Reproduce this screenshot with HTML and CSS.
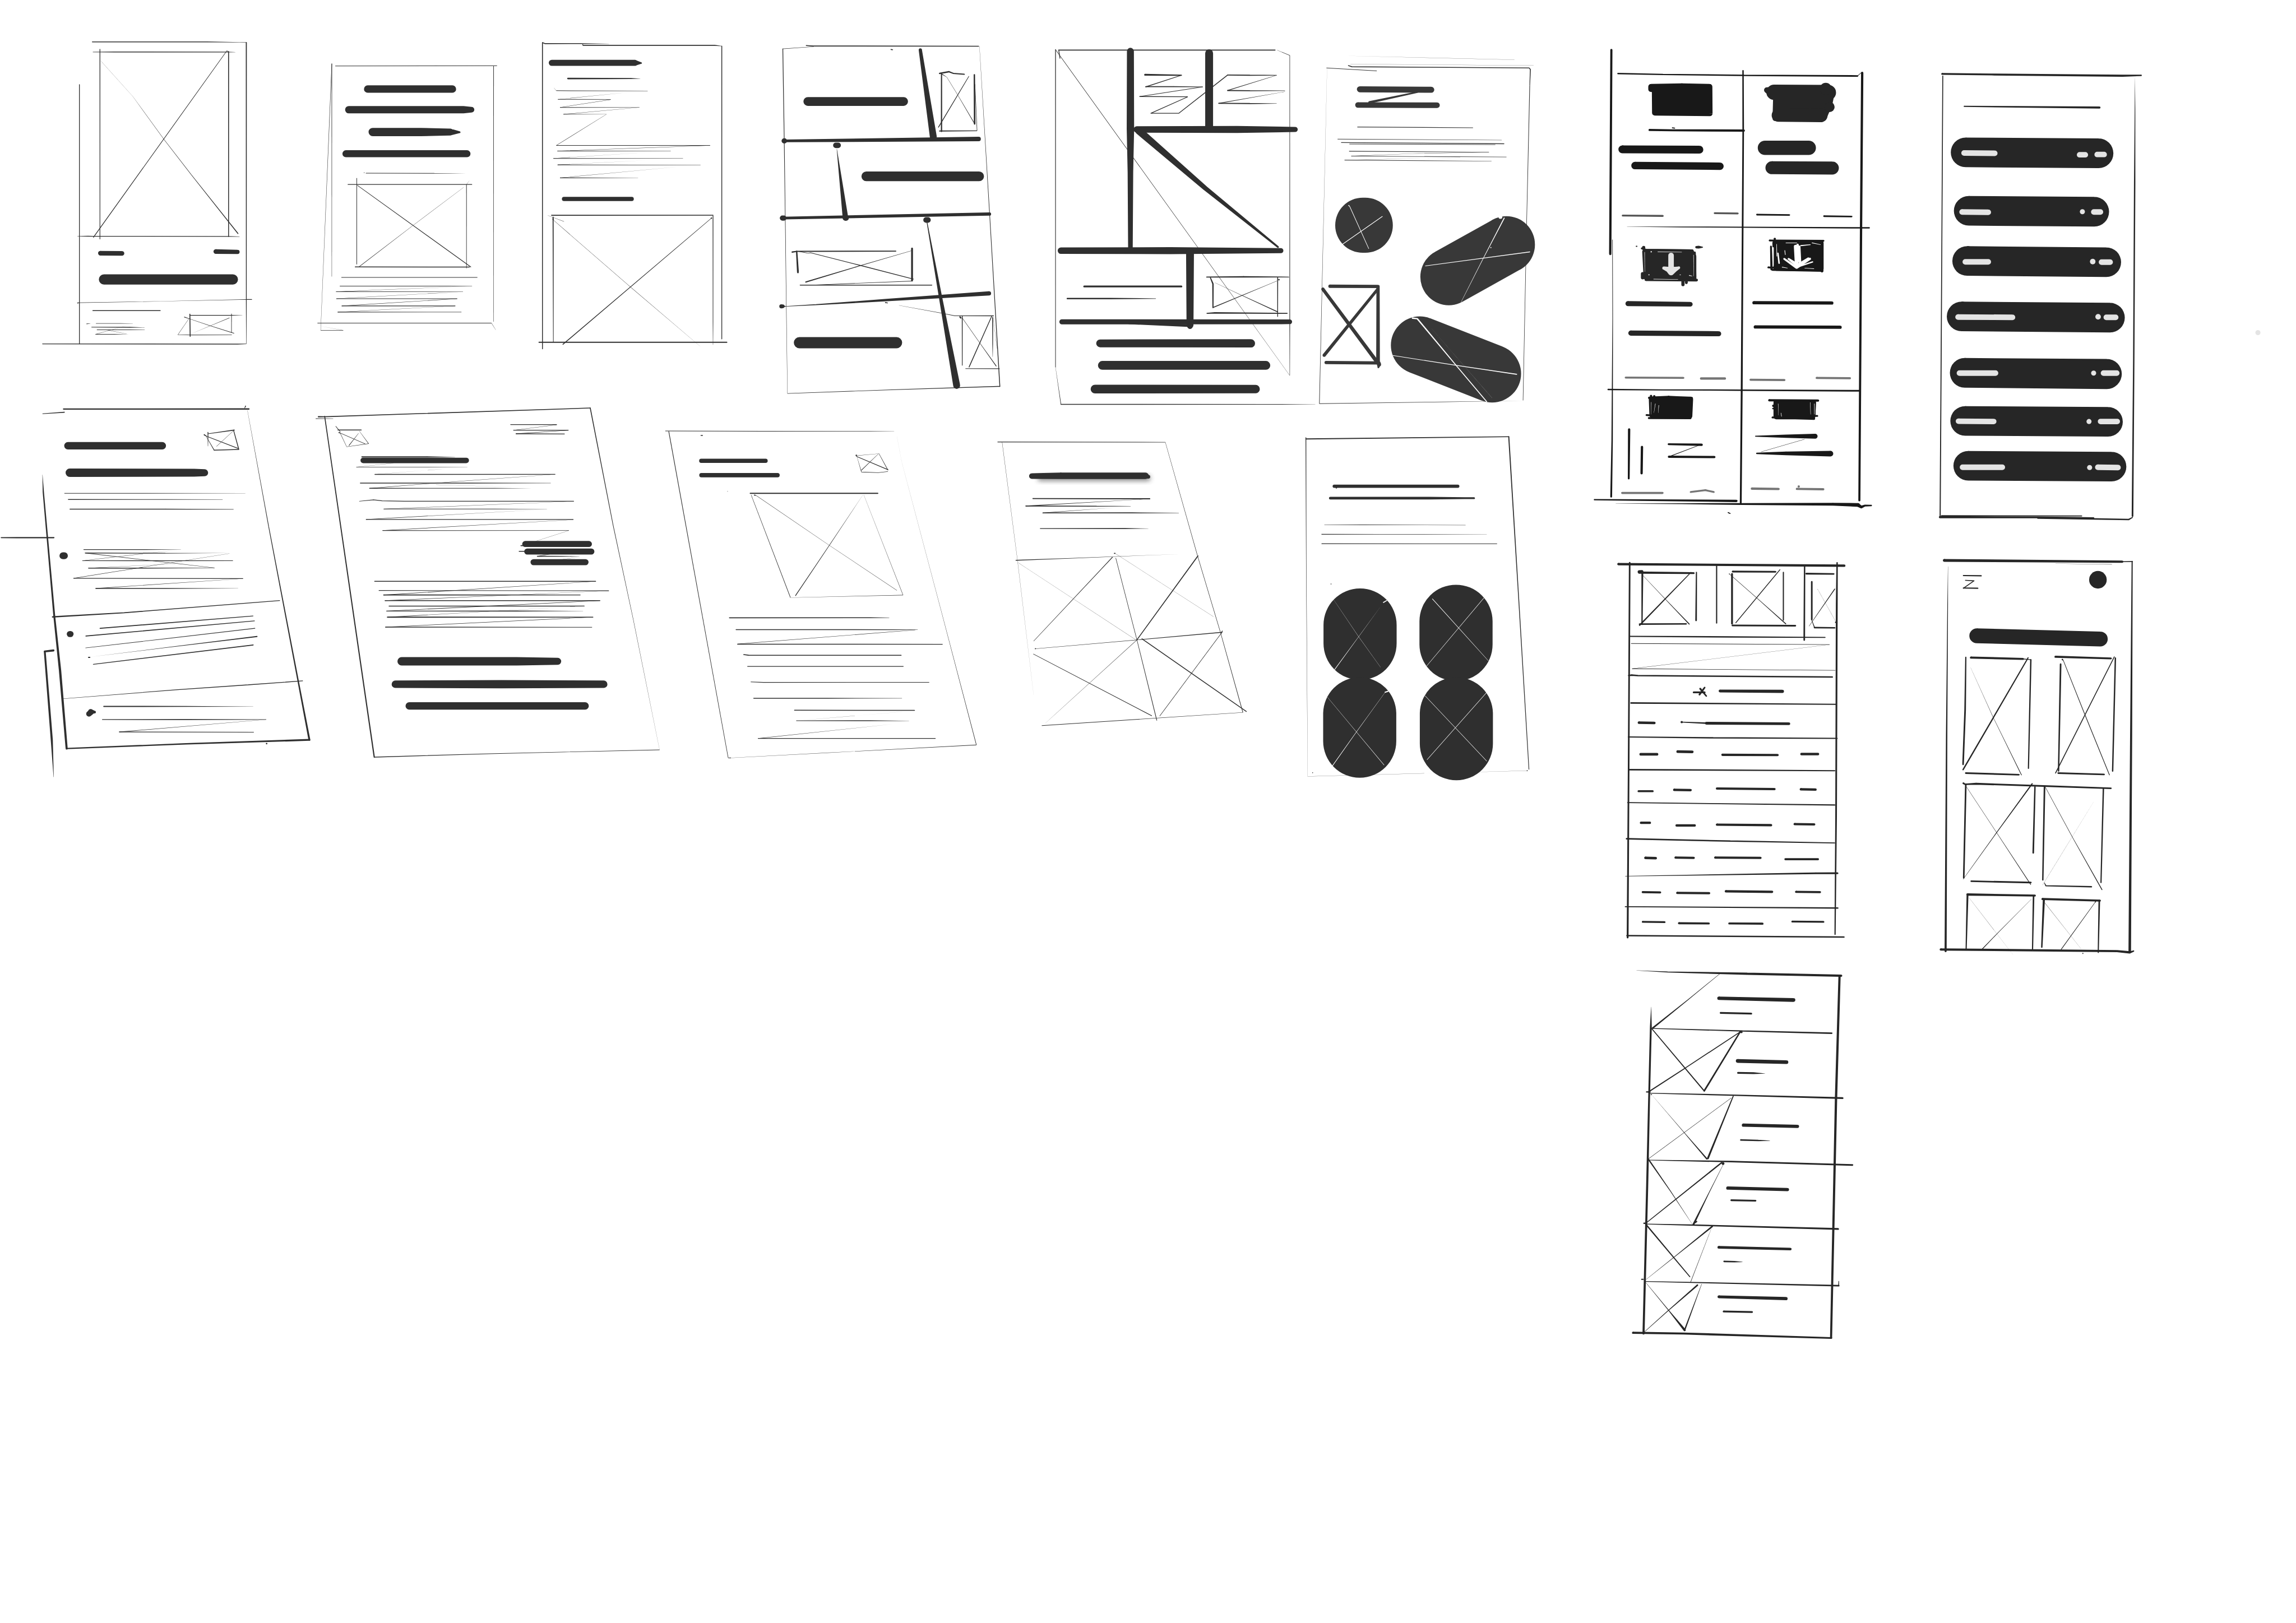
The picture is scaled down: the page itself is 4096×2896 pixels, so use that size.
FILE: index.html
```html
<!DOCTYPE html>
<html lang="en">
<head>
<meta charset="utf-8">
<title>Wireframe thumbnails</title>
<link rel="stylesheet" href="styles.css">
</head>
<body>
<main class="board">
<svg class="board-canvas" viewBox="0 0 4961 3508" role="img" aria-label="Wireframe thumbnails">
<defs><filter id="soft" x="-10%" y="-60%" width="120%" height="220%"><feGaussianBlur stdDeviation="5"/></filter></defs>
<g id="sheets"></g>
</svg>
</main>
<script src="sketches.js"></script>
</body>
</html>
```
FILE: styles.css
```css
body {
  margin: 0;
  background: #fff;
}

.board {
  height: 100vh;
  overflow: hidden;
}

.board-canvas {
  display: block;
  width: 100%;
  height: 100%;
}

.ink-graphite { fill: #2f2f2f; }
.ink-charcoal { fill: #383838; }
.ink-black { fill: #181818; }
.ink-dark { fill: #262626; }
.ink-grey { fill: #757575; }
.ink-mid { fill: #555; }
.ink-light { fill: #e4e4e4; }
.ink-white { fill: #fff; }

.ink-soft {
  fill: #2f2f2f;
  opacity: 0.6;
  filter: url(#soft);
}
```
FILE: sketches.js
```js
// Each sheet has an origin on the board, its own units per board unit, and an ink.
// A stroke is a line of "x,y,w" points; w is the pen width in board units and
// carries over to the next point when left out.
// A line that starts with "@name" changes ink, "f" fills a closed outline.
const sheets = [
{ at: [80, 70], unit: [3, 2.24], ink: 'graphite', strokes: `
358,46,2 1100,46,1.6 1310,48,.6 1356,49,1
1356,49,2.2 1356,1300,1.6 1356,1508,.7
361,95,1 500,95,1.8 1230,95,1.6 1285,96,.4
407,82,1.6 407,1002,1.4
1230,89,1 365,992,1.6
1230,89,1 1241,93
1241,93,2 1241,988,1.8
415,140,.05 620,310,.3 820,516,.7 1000,690,1 1302,974,2
274,253,1.6 274,1508,1.6
261,987,.5 330,987,2 360,987,1.6 1240,988 1312,989,.6
410,1069,10 550,1070,10
1158,1061,10 1299,1063,9
433,1196,22 1269,1196,22
262,1310,2 274,1309,1 800,1302,.5 1356,1293,.9 1360,1293,1.6 1391,1293
361,1347,1.8 798,1347
320,1411,1.4 345,1410,.4
381,1409,.9 540,1409,1 620,1410,.2
352,1427,1.2 600,1428,1.8 697,1429,.4
387,1440,1.4 600,1440,1.2 697,1440,.4
378,1462,1.2 500,1462 595,1463,.2
378,1462,.6 600,1415,.1
450,1440,.4 580,1460,.1
990,1364,2 992,1472
990,1370,1.6 1260,1370,1.4 1330,1370,.4
1260,1362,1.2 1260,1455,1
912,1464,.6 1000,1465,1.2 1262,1465,1
953,1378,1.4 1000,1390,.5 1120,1420,.7 1277,1457,1.2
1247,1382,1.2 1005,1457,.3
985,1385,.5 912,1464,.6
35,1508,1.6 1300,1509,1.8 1356,1508,.8` },

{ at: [680, 80], unit: [1.742, 2.24], ink: 'graphite', strokes: `
64,128,1.2 64,1160,.6
64,130,.9 22,1420,.4
22,1420,1 107,1420,.9
22,1400,.2 107,1420,.3
77,140,1.2 686,139
673,140,1.2 673,1378,.7
10,1385,1 665,1385,1.2
665,1385,.6 681,1418,.2
199,252,16 518,252
128,352,16 560,352 590,352,12
218,460,18 400,460 510,460,15 545,461,4
117,565,15 573,565
192,659,1.2 450,660,1 570,660,.2
185,657,1.5 187,657
125,714,1.6 591,714
158,683,1.2 158,1101
571,714,1.2 571,1120,1
571,714,.4 582,695,.2
152,1113,1.6 582,1114,1.8
160,718,1 587,1113,1.6
167,1112,1 370,912,.5 560,728,.1
100,1164,1.4 612,1164,1
94,1206,1.2 500,1206,1 592,1206,.4
80,1233,1.2 558,1233,.8
81,1267,1.4 536,1267,1
102,1302,1.6 529,1302,1.4
86,1332,1.4 552,1332,.8
592,1206,.2 80,1233,.7
558,1233,.2 81,1267,.7
536,1267,.8 102,1302,.9
529,1302,.2 86,1332,.5
857,28,2 857,1510,1.8
857,27,2 866,32 1000,32,1.8 1108,33,.4
1008,36,1.6 1010,40,2.2 1505,40 1532,44,.6
1532,44,1.8 1532,1462,1.6
892,125,13 1205,125 1229,126,3
953,201,3.5 1090,201,3 1190,201,2 1225,202,.3
900,246,.3 909,260
909,260,1.2 1253,261,.6
915,302,1.2 1114,302,1
923,341,1.2 1222,341,.6
936,374,1.2 1098,374,.4
1180,268,.1 915,302,.5
1114,303,.5 923,341,.6
1222,341,.3 936,374,.7
1098,374,.3 909,525,.7
909,525,1.2 1488,525,1
1488,525,.5 913,552
913,552,1.2 1340,552,.4
1270,557,.1 898,588,.5
898,588,1.2 1386,588,.8
1250,597,.1 914,619,.5
914,619,1.4 1452,620,.7
1370,628,.1 923,682,.6
923,682,1.4 1217,682,.5
938,784,9 1193,784
891,863,2 1499,863,1.8
897,872,2.2 898,1477,1.2
1499,865,1.6 1499,1380,1.2 1499,1490,.5
1493,877,3
1493,877,1 934,1488,1.8
897,882,3
897,885,.5 1188,1210 1450,1497,.3
877,864,.3 938,893,.6
844,1478,2.2 1551,1478` },

{ at: [1660, 80], unit: [2.904, 1.96], ink: 'graphite', strokes: `
91,50,1.6 100,440,1.4 107,800,1 114,1200,.7 120,1510,.5
91,50,1 285,41,.7
238,36,1.8 285,38,2 1320,39,1.8
1325,39,.3 1388,740,1.2 1453,1480,1.8
1453,1480,1.8 800,1494,1.2 120,1510,1
770,53,2 780,54
954,55,7 1036,425,15
248,273,19 849,273
99,440,11 102,440
99,440,6 1320,432,9.5
424,459,12 438,459
430,475,.5 484,765,12
484,767,12 488,767
615,590,21 1323,590
88,767,11 98,767
93,767,6 1388,750,7
990,775,12 1002,775
996,785,1.5 1080,1100,7 1182,1476,15
150,911,3 180,908,2.5 800,907,2.2
178,908,3 186,997,4
902,896,4 902,1032
912,1026,1.5 580,968,1.6 265,914,1.2 250,916,1 190,908
235,1038,2.5 580,968,1.4 900,905,.5
200,1051,2 1026,1051
905,1034,1.2 300,1050,1
82,1141,9 90,1141,8
90,1141,5 110,1141,1 300,1134,2 730,1115,5 1385,1086,9
735,1125,2 750,1127,1.5
820,1137,.2 1090,1170,.8 1170,1181,1.2 1413,1181,1.6
1203,1186,3 1208,1190
1217,1183,1.8 1217,1392,1.4
1217,1190,.6 1327,1296,.9 1430,1394,1.6
1402,1183,1.6 1260,1398,1.8
1408,1188,2 1408,1300,1.5 1408,1355,.4
1237,1405,1.2 1450,1405,1.6
1412,1190,.2 1435,1320,.4
195,1295,24 805,1295
1075,154,3 1133,147 1160,154,2.5 1230,158
1087,158,2.5 1087,400,2.8
1293,160,3 1295,368,3.4
1297,200,.8 1310,397,1
1075,398,2.5 1310,397,1.5
1085,155,2 1120,170,.5 1188,245,.6 1295,368,1.4
1259,166,1.2 1068,382,1.8` },

{ at: [2260, 80], unit: [1.452, 1.912], ink: 'graphite', strokes: `
30,52,1.6 30,1365,1.2
30,1365,.3 47,1518,1.2
47,1518,1.8 700,1518,1.4 845,1518,.3
40,54,2 719,54
725,54,.4 765,76,1 765,1180,1.4 765,1399,.7
44,88,1.6 40,54
30,52,1 475,867,.9 765,1399,.3
265,59,15 265,380,16 265,560,12 265,870,10
512,67,17 512,370
285,382,14 600,382,15 782,382,11
292,388,16 500,625,10 728,868,4
47,883,14 390,883,15 737,883,11
452,890,17 452,1190,15
452,1196,11
50,1177,11 765,1177,10
260,1185,2 445,1192,6
311,156,4 425,158,2.5
425,158,1.4 313,206,1.8
313,205,2 400,205 492,206,1
492,206,1 294,246,1.4
294,246,1.6 445,247,1.4 329,315,1.6 417,315 570,157,1.8
570,157,2.2 640,158,2.6 724,158,1
724,158,.5 570,221,1.6
570,221,2.4 640,222,2 750,222,1
750,226,.4 542,274,1.6
542,274,2 640,275,2.4 724,275,.8
120,1031,4 425,1031
67,1081,3 200,1081 345,1081,1
504,992,2 620,991,3 762,992,1.6
516,995,2 524,1020,3 524,1118,2.4
727,995,2 727,1155,1.6
731,1003,3.2
505,1142,2 530,1140,3 757,1142,2
524,1118,2 615,1068,1.2 725,1008,.4
530,1015,.3 615,1068,.8 727,1136,2
170,1266,17 643,1266,18
177,1357,19 690,1357
154,1455,19 658,1455,18
@charcoal
915,77,.15 1470,94,.1
880,128,1.2 1038,140,1.4
949,118,2 960,123 1200,125,1.6 1516,128,1.8 1520,134,2 1518,200,1.4 1508,780,1 1497,1502
955,112,.3 1530,118
882,130,.1 872,700,.4 858,1515,1.2
858,1515,1.2 1250,1508,.8 1497,1503,.1
985,216,13 1209,218
979,281,12 1227,282
1165,228,3 1015,270,5
977,372,1.4 1340,375
915,422,1.4 1430,426,.8
927,436,1.6 1437,441,1.8
952,442,1.2 1410,445,1
952,472,1.6 1390,476,1
958,492,1 1445,496
937,509,1.2 1398,513,.8
1390,476,.3 1150,482,.4 958,492
1300,497,.1 937,509,.5
994,778,119 1002,778
1445,858,123 1264,991
1173,1274,125 1400,1391
891,1030,7 1042,1031 1042,1345,8
1045,1353,9 1043,1365,4
869,1042,7 1040,1345,8
1042,1040,6 873,1315,7
879,1345,7 1045,1347
@white
950,696,2 953,700,1.2 1013,875
1056,741,1.4 930,857
1438,748,2 1372,915,1.2 1302,1097,.5
1190,946,1 1372,914,1.5 1518,888,1.8
1426,744,8
1396,870,2.4
1150,1162,3 1165,1164 1287,1357,2 1383,1507
1088,1316,1.2 1287,1357,1.6 1477,1394,2
1200,1190,.05 1400,1492,.3` },

{ at: [0, 860], unit: [2.24, 1.867], ink: 'graphite', strokes: `
205,64,1.4 311,58,2
307,45,2.8 1204,45,3
1183,42,.8 1188,33,2
1197,50,.3 1300,520,1.4 1442,1140,3 1497,1380,4
1497,1380,4 900,1396,3 322,1415,2.6
205,310,.3 209,380,2.8 262,880,4 290,1100,5 322,1415,4.5
5,564,2 80,564,2.6 260,564,2.8
258,1019,4.5 216,1023,4
216,1023,4 250,1380,4.5 259,1530,.5
328,193,16 785,193
337,302,18 940,302,17 990,302,15
311,385,1.2 700,385 1187,385,.4
330,410,1.6 800,410,1.2 1077,410,.4
338,449,1.8 800,449,1.6 1130,450,1
405,612,1.6 700,612 875,612,.3
412,626,2 800,627,1.6 1110,626,.2
398,657,1.4 700,657,1.8 1127,657,1
428,687,2 700,687,1.8 1038,686,.8
355,728,1.4 1176,729
463,769,2 800,769,1.6 1152,769,.3
870,612,.1 398,657,.7
412,626,1 700,654,.7 1038,686,.8
930,666,.1 428,687,.8
355,728,1 700,682,.7 1110,628,.1
1176,729,.4 463,769,1
254,884,3 600,867,2 1353,818,1.6
484,930,2.2 1224,880,1.6
415,961,2 1231,900,1.6
413,1009,.8 800,972,1 1233,930,1.6
428,1047,2.4 434,1047
440,1045,.2 800,1008,1 1243,963,2.6
451,1075,1.6 1225,997,2
306,1214,.8 850,1178,1.4 1200,1158,2 1464,1142,1.6
502,1245,2.6 900,1245,2 1225,1246,.3
495,1298,1.6 900,1298,2 1288,1298,1
577,1348,1.8 1228,1349,1.4
1288,1298,.1 577,1348,1
304,637,15 311,637,15
337,953,13 341,953
430,1275,12 440,1268,12
438,1266,11 457,1268,6
1290,1395,3.4
1006,139,1.8 1006,195,.6
1006,145,1.2 1133,130,2.2
1130,131,1.6 1155,207,1.8
1155,208,1.8 1036,211,1.6
1036,211,1.6 995,152,.6
988,149,2.4 1000,155,1.2 1155,205,1.4
1130,132,.5 1047,196,.8` },

{ at: [680, 860], unit: [2.063, 1.96], ink: 'graphite', strokes: `
16,80,2.6 43,80,2 1228,43,1.8
4,88,1 82,88,.8
44,78,2 150,770,2.4 265,1522,2.6
265,1522,1.8 800,1507,1.2 1537,1491,1
1228,43,2 1330,540,1.2 1420,940,.6 1537,1491,.15
93,120,1.2 114,144,1
103,136,1.8 207,136
108,147,2.4 116,150,.9 225,195,1
112,147,.8 142,207,.6 240,194,.8
240,194,1 198,140,.3
195,150,.5 152,202,1.3
873,113,1.6 1079,113,1.4
885,137,1.4 1131,137
897,152,1.6 1114,153,1.4
1079,114,.4 885,137,.6
1131,137,.6 897,152,1
210,250,2.4 500,250 625,251,.4
216,265,12 675,265
185,293,1.2 500,293,1 680,294,.2
268,324,1.8 1072,324,1.4
203,361,1.8 700,361,2 1052,361,.8
244,383,1.6 800,383,1 968,383,.2
350,277,.4 185,293,.6
590,300,.1 268,324,.4
1072,324,.3 620,355,.6 244,383,.9
540,368,.3 900,378,.1
198,438,1 262,432,1.6 300,436,1.4 400,438,1.6 1155,438,1.4
307,471,1.2 800,471 1035,471,.2
228,515,1.4 1153,515
302,562,1.4 1133,562,1
1155,438,.3 307,471,.6
1035,472,.2 228,515,1.2
1153,516,.4 302,562,1
1133,562,.4 985,607,.6
938,619,13 1222,619
919,626,2 930,626
911,650,2 940,650
947,651,13 1233,651
975,696,13 1207,696
992,671,2 1100,671,1.6 1180,672,.3
992,671,1 1060,660
1175,675,.2 1090,686,.4
267,777,2 1252,777,1.8
285,816,1.4 1311,817
307,835,2 1183,835,1.6
313,859,1.6 1271,859,1.8
331,882,1.8 1201,882,1.6
319,903,1.4 900,903,2 1196,903,.4
324,929,2.6 1240,929,1.6
315,971,1.8 1236,972,1.2
1252,777,.5 640,815,.9 307,835,1.2
1311,817,.3 313,859,1
1271,859,.8 319,903,1
1160,884,.2 324,929,1
1240,929,.8 315,971,1
387,1116,18 900,1116 1083,1116,15
359,1213,16 830,1213,18 1288,1213,16
421,1305,16 1205,1305` },

{ at: [1420, 900], unit: [2.178, 2.063], ink: 'graphite', strokes: `
38,65,1.4 500,66,1.2 1000,66,1 1115,66,.2
54,66,1.4 334,1523,1
334,1523,1 345,1523,1.6
345,1523,.2 800,1500,.4 1502,1465,1
1128,90,.05 1150,200 1200,380,.15 1340,880,.4 1502,1465,1.1
206,85,2 213,85
330,334,1.2 332,334
207,198,9 510,198
208,262,9.5 566,262
438,343,2.6 1038,343,2.4
442,350,.7 627,808,1.2
628,808,.2 1157,797,.8
1157,797,.7 972,350,.25
458,351,2.4 466,353,.7 810,575,.6 1128,776,.5
651,799,1.6 810,575,1 968,350,.15
937,174,3.4
940,175,.6 1046,166,.5
1044,167,.7 1086,240,1.2
1086,246,1 1040,251 961,248 940,180,.3
937,178,1.2 1086,238,1.6
1042,166,.5 960,241,1.4
340,898,2.2 1000,898,1.8 1092,898,.6
371,951,1.8 1100,951,1.6 1226,951,.6
378,1016,1.8 1342,1016,1.6
1215,952,.5 378,1015,1.1
407,1062,2 430,1065 1148,1065,1.8
424,1115,1.4 1159,1115
440,1184,1.2 500,1186,1.4 1280,1186,1.2
454,1257,1.8 800,1257,1.6 1152,1257,.5
646,1310,1.8 1211,1311
654,1357,1.4 1000,1357,1.6 1185,1358,.3
475,1436,1.6 1310,1436,1.4
1180,1315,.1 654,1357,.25
1110,1372,.1 475,1436,.7` },

{ at: [2140, 920], unit: [1.307, 2.01], ink: 'graphite', strokes: `
@soft
140,230,10 444,228,12
@graphite
20,71,1.4 494,72,1
33,72,.5 76,580,.35 122,1170,.05
494,72,.5 585,566,.9 650,900 713,1246,1.2
713,1246,.7 145,1303,1.3
117,219,12 200,218,14 438,218,14 446,222,8
120,317,2 450,318,2.4
100,349,2.2 300,350,1.6 396,350,.6
148,379,1.8 400,379,2 532,379,.6
140,447,1.4 380,447,2 446,447,.4
450,318,.4 100,349,1.4
350,356,.2 148,379,1.2
72,585,1.6 230,576,.9 345,569,.5 540,558,.1
345,571,1.4 122,936,.7
78,595,.2 410,930,.4
354,575,1 414,932 470,1281,1.4
586,566,2.2 413,932,1.8
350,555,2 352,555
352,555,.3 630,830,.15
127,969,2.4 129,969,.6 413,931,.9 654,898,1.8
655,892,1.6 652,902
121,992,.9 455,1260,1.6
413,932,.8 155,1293,.2
428,926,2 723,1242,1.6
654,898,1 478,1262
891,58,2.4 1464,48,2
891,52,1.6 892,600,.8 896,1524,.2
1464,48,2.4 1490,700,1.8 1521,1494,1.4
896,1524,.2 1518,1499,.3
1516,1499,2
971,263,7 1320,263
960,315,6 1240,315 1340,315,4 1366,315
977,270,3
943,431,.6 1050,431,1.2 1342,432,.5
935,472,1.4 1100,472,1 1402,472,.2
936,513,1.6 1431,513,1.2
962,688,2
910,1508,2
1044,866,158 1044,946
1315,850,158 1315,951
1043,1252,158 1043,1371
1316,1252,158 1316,1382
@white
968,753,.3 1040,917,.4 1102,1050
1110,768,2 1119,760
1100,790,.1 1040,917,.5 972,1060,1.2
1248,752,1.2 1406,1021,.7
1394,748,.9 1225,1057
952,1180,.3 1112,1475,.9
1115,1158,2.5 1123,1154
1115,1158,.3 1034,1330,.7 965,1480,1.2
1228,1174,.7 1402,1458,.9
1401,1160,.9 1233,1452` },

{ at: [3430, 90], unit: [2.45, 1.508], ink: 'black', strokes: `
127,27,4.6 121,692,5
133,645,1 134,900,1.2 131,1300,3 126,1483,4
162,104,3 400,107 830,110 1430,112,3.5
1430,112,1 1452,100
1455,102,5 1449,600 1440,1495,4.5
824,95,3 825,290,3.4 817,1140,4 812,1503
f 337,147 500,145 647,147 648,234 500,233 357,232 356,156 337,155
329,288,4.5 450,289 828,290,5
450,281,2 462,282
185,351,17 593,352
252,404,16 702,406
898,564,3.5 1069,565
1253,569,3.5 1399,570
210,603,.5 500,604,2 1447,607,3 1492,607
882,851,7 1294,852
889,930,7 1338,931
110,1134,3 400,1135,2.4 815,1136,3 1440,1138,3.5
f 340,1166 545,1166 541,1220 343,1218
327,1161,5 430,1158 553,1162
337,1155,5
354,1156,5
313,1217,4 335,1218
325,1227,4 545,1227,5
f 1000,1176 1196,1176 1192,1222 1000,1222
963,1169,5 1221,1170
1206,1176,3 1204,1222
984,1187,5 995,1190
982,1196,3 995,1196
980,1225,4 1200,1229,5
1195,1220,4 1217,1220
221,1264,5 219,1424,4
289,1321,5 287,1407
430,1312,4 605,1314,5
590,1316,1 432,1353,1.6
432,1353,5 672,1354
890,1286,2 1050,1286,7 1206,1286,10.5
1150,1296,.5 920,1337,.4
897,1342,3 1050,1342,8 1287,1343,12
37,1493,2.5 789,1497,5
150,1506,.3 500,1506,2 820,1507,4 1300,1508,6 1432,1510,8
1432,1510,8 1450,1517,6 1470,1512,4 1503,1512,3
745,1535,2 756,1538
f 994,656 1236,656 1236,740 1000,738
965,648,4 1250,649
992,643,5
972,668,4 975,742,5
958,736,4 985,737
980,744,4 1245,747
1244,652,4 1242,748,6
@dark
f 950,158 1262,150 1290,180 1282,205 1250,250 995,250 998,182
988,165,33 1276,166
1262,154,26
1282,213,22
1010,240,28 1235,240,30
940,346,31 1172,346
977,411,28 1297,412
f 305,685 550,686 562,700 562,768 312,768
288,674,4 310,679,5 556,681
298,671,7
568,688,5 571,775
310,776,6 578,777
293,757,8 293,769
577,670,5 590,670,6 610,670,2
259,667,2.4 262,667
506,782,7 506,792
524,778,6 524,786
215,854,11 545,856,10
230,950,11 695,952
@mid
187,567,4 399,568
674,559,4 796,560
@grey
203,1095,4.4 508,1096
602,1098,5 728,1098
864,1102,4.6 1043,1103
1214,1096,4.6 1390,1097
184,1471,4.4 398,1471
547,1468,4 625,1462 669,1468
871,1457,5 1012,1458
1119,1450,5
1109,1458,4.6 1249,1459
@light
443,697,12 443,748
405,738,7 430,743,12 443,752,13 460,743,12 484,737,6
338,685,3
372,685,1.4 500,686,1
303,686,1 304,750,.6
562,695,1 563,765,.6
326,760,2.6
350,774,1 480,775,.8
490,760,1.6 493,760
540,762,2 555,764,1
@white
1103,668,8 1108,725
1122,668,5 1125,720,6
1113,662,5 1116,715
1042,708,4 1108,737,5 1178,708
1065,708,4 1115,730,8 1170,706,4
1192,718,3 1110,735
983,672,3 984,730,2
1050,656,1.2 1110,656
1130,665,2.4 1180,662,1.6
1190,656,1.6 1235,662,1
1009,690,3 1015,722,3.4
1002,660,1 1003,700,1.4
1030,735,1.4 1060,738,1
1150,738,1 1200,740,1.2
1045,680,1.4 1048,695
338,1175,.8 338,1215,.4
360,1180,1 352,1210,.4
378,1185,1 375,1210,.4
530,1222,1.4
1202,1180,1 1202,1215,.8
1180,1176,.8 1182,1215,.6
1010,1180,.8 1012,1218,.4
1025,1210,1 1028,1222` },

{ at: [4170, 140], unit: [3, 1.568], ink: 'dark', strokes: `
80,31,4 400,33 1250,37,4.5 1370,36,3
84,38,2 78,600 67,1530,2.4
1330,45,.1 1330,150,1.4 1328,400,3 1322,1000 1314,1530,3.6
66,1533,5 700,1534,4 1062,1536,3
700,1536,3.4 1290,1541,3 1314,1534,2
75,1528,2 985,1529
223,141,2.4 1100,145,4.4
232,297,64 1094,300
252,495,64 1066,498
242,665,64 1144,669
206,853,64 1168,857
226,1044,64 1147,1048,65
229,1207,64 1155,1210
249,1359,64 1178,1362
@light
222,299,12 421,300
971,305,12 1008,305
1085,304,12 1130,304
209,499,12 379,500
989,498,11
1063,499,12 1106,499
230,668,12 379,668
1056,667,12
1113,669,12 1169,669
183,855,12 536,856
1091,854,12
1144,856,12 1205,856
192,1045,12 426,1045
1062,1045,11
1126,1045,12 1212,1045
186,1208,12 414,1209
1032,1209,11
1107,1209,12 1215,1209
212,1364,12 470,1364
1036,1365,11
1089,1364,12 1220,1365` },

{ at: [3480, 1190], unit: [1.352, 1.742], ink: 'dark', strokes: `
23,51,5 683,57
56,46,3.5 53,800 50,1457,4
662,46,3 661,200,4 659,1000,3.6 656,1445,2.6
84,80,7 92,78,5
84,83,5 243,85,4
93,78,4 92,278,2.6
85,277,3.5 221,276,3
251,82,2.5 250,263,3.5
235,82,1.6 85,281,3
92,90,.5 158,180,.9 230,277,2
310,58,2.6 310,273
357,79,4 482,80,3.5
355,88,4 355,275
356,282,3.5 540,283
505,82,2.5 505,262
495,72,1.6 366,272
347,88,2 349,90,.8 427,178,1 512,276,2
567,60,3 566,337,3.5
572,87,4 652,88,3.5
588,118,3.5 588,260
588,262,1 596,290,2
596,290,3.5 655,291,3
655,145,2 580,285,.7
605,145,.1 657,265,.4
658,270,3.5
58,323,2.6 350,325,3 627,327,2
60,350,1.2 640,354,.8
640,354,.25 63,445,.5
63,445,1 657,451,.9
53,470,3 62,469,3.5 80,471,3 648,476
243,534,4 275,534
262,520,4 280,548,3
275,516,3.5 260,542,4
320,529,6 502,530,7
60,574,3.4 658,579,2.6
83,648,5.5 128,649
208,646,5
208,646,2 280,650,3.5
280,650,6 521,652
52,702,2.4 300,705,3 662,707,2.6
88,767,5.5 136,767
196,757,5.5 239,758
327,769,5 488,770
558,766,5.5 606,766
55,825,3.4 655,829,2.4
82,906,4.5 123,906
186,901,5 234,902
311,896,5 479,898
556,899,5 599,900
50,949,2 655,958,2.6
89,1025,5 115,1025
193,1035,5 246,1035
311,1032,5 469,1034
538,1030,5 595,1031
47,1085,3.4 350,1094,3 655,1101,2
102,1157,5.5 132,1158
190,1156,5 243,1157
306,1156,5 438,1157
511,1162,4.6 606,1162
43,1226,1 350,1220,2.4 600,1215,3.5 663,1215,4
94,1286,4.5 145,1287
195,1289,5 288,1290
337,1283,5 472,1285
542,1285,4.5 612,1286
43,1341,2 664,1346,3
94,1398,4 158,1399
200,1403,4.5 287,1404
347,1404,4.5 444,1405
531,1397,4 622,1398
48,1450,3 682,1455
975,37,6 1495,42,5
1495,42,2 1525,41
1300,49,.2 1465,52,.5
1524,41,2.4 1521,700,4.5 1517,1510,5.5
986,60,.3 985,200,1.4 982,700,3 979,1508,4.5
965,1502,5 1480,1508,4.5 1517,1513,5 1528,1508,3
1031,94,2.4 1083,95,2.6
1037,112,2 1062,114 1031,142
1031,141,2.6 1073,142
1424,110,38
1070,321,32 1431,333
1053,403,4.5 1205,408
1205,408,2 1228,411,1.6
1038,402,2.6 1036,600,3.5 1030,805
1228,411,3 1221,820,2.6
1038,838,3.5 1193,844
1220,404,2.4 1030,825,3
1052,440,.2 1118,628,.7 1201,846,1.4
1300,400,4.5 1462,406,4
1315,428,3.5 1309,830,3
1475,405,3 1467,830
1308,838,3.5 1442,843,3.2
1472,400,1.8 1300,838,2
1320,410,3 1323,414,1.2 1386,618,1.4 1458,846
1031,876,4 1036,880,3 1068,878,4 1277,887,3.6 1462,895,3.4
1038,880,3.4 1032,1232
1232,878,2.6 1128,1062,1.4 1030,1238,.6
1040,890,.6 1128,1062,.8 1228,1258,1.4
1240,890,3 1235,1138,3.5
1054,1245,3.5 1228,1250
1268,888,3.5 1263,1240,3
1440,895,3 1433,1250,2.6
1270,890,.8 1352,1085,1 1436,1277,1.8
1412,945,.1 1262,1260,.3
1267,1250,.8 1272,1262,2.4 1405,1266,3
1043,1295,5 1240,1299,4
1043,1295,4 1039,1500,2.5
1236,1300,3.4 1233,1500,2.6
1230,1312,.2 1135,1435,1 1084,1503,1.8
1048,1308,.3 1175,1520,.15
1262,1312,4.5 1430,1318,4
1266,1315,4.5 1260,1493,3
1428,1318,3.5 1425,1513,2.4
1417,1322,2.4 1415,1326,.8 1316,1503,1.4
1268,1325,.5 1375,1500,.2
1380,1517,2.4` },

{ at: [3500, 2080], unit: [2.904, 1.867], ink: 'dark', strokes: `
105,33,.3 300,39,2.4 800,46,5 1389,54
1379,57,4.8 1357,550,5 1326,1515,4.5
197,180,.3 195,260,4 185,520 172,900,4.5 149,1498
628,46,.6 430,150,1.4 207,265,3.5
203,267,1.4 770,277,2.6 1330,286,3.4
200,267,2 530,519,2.6
530,519,3.5 755,281,3
755,281,4 765,282
755,281,2 410,427 180,523,2.6
168,523,2.6 190,523
622,145,7 1090,152,8
633,204,4 825,207
740,398,8 1046,403
742,446,4 840,447 912,449,.5
776,657,7 1115,662
760,717,3.5 870,719,3 942,720,.4
678,911,7 1052,917
700,960,4 852,962,3.6
621,1150,5.6 1070,1157
655,1207,3.5 720,1208,3 770,1209,.4
622,1350,6 1043,1357,7
652,1409,4 830,1411
185,528,1.6 700,536,3 1398,548,4
196,534,1.8 200,534
205,538,.2 400,684,1 546,793,3
553,791,4 712,540,2
700,547,.7 180,793,.9
183,798,1.4 700,804,3.4 1460,818,3.6
180,795,3 320,925,1.4 455,1057,.4
462,1058,4 560,930,1.4 650,815,.6
648,812,6
640,808,3 163,1053,1.8
152,1053,3 160,1053
470,1050,4 482,1046,3
165,1056,1.4 500,1061,3 1370,1076,4
170,1062,3 440,1269,2
580,1066,3.4 340,1190,1.2 165,1280,.4
574,1075,.3 443,1293,1
137,1279,2.4 147,1279
163,1288,1.4 600,1294,2.6 1374,1305,3.4
1374,1286,1.2 1374,1305,2
163,1292,.5 306,1404,1.6 407,1484,5
407,1484,3 514,1298,.6
487,1303,3.5 306,1404,1.6 155,1491,.8
83,1495,4.5 400,1498 1328,1516,3.6` },

{ at: [4879, 719], unit: [1, 1], ink: 'light', strokes: `
0,0,11` }
];

const NS = 'http://www.w3.org/2000/svg';
const host = document.getElementById('sheets');
const n = v => v.toFixed(2);

function penPath(points) {
  let d = '';
  points.forEach((p, i) => {
    const r = p.w / 2;
    if (p.w > 1.5) {
      d += `M${n(p.x - r)} ${n(p.y)}a${r} ${r} 0 1 1 ${n(p.w)} 0a${r} ${r} 0 1 1 ${n(-p.w)} 0z`;
    }
    const q = points[i + 1];
    if (!q) return;
    const len = Math.hypot(q.x - p.x, q.y - p.y) || 1;
    const nx = -(q.y - p.y) / len / 2;
    const ny = (q.x - p.x) / len / 2;
    d += `M${n(p.x - nx * p.w)} ${n(p.y - ny * p.w)}L${n(q.x - nx * q.w)} ${n(q.y - ny * q.w)}`
      + `L${n(q.x + nx * q.w)} ${n(q.y + ny * q.w)}L${n(p.x + nx * p.w)} ${n(p.y + ny * p.w)}z`;
  });
  return d;
}

for (const sheet of sheets) {
  const group = host.appendChild(document.createElementNS(NS, 'g'));
  let ink = sheet.ink;
  for (const line of sheet.strokes.trim().split('\n')) {
    if (line[0] === '@') {
      ink = line.slice(1);
      continue;
    }
    const filled = line[0] === 'f';
    let w = filled ? 12 : 2;
    const points = line.replace('f ', '').split(' ').map(s => {
      const v = s.split(',').map(Number);
      if (v.length > 2) w = v[2];
      return { x: sheet.at[0] + v[0] / sheet.unit[0], y: sheet.at[1] + v[1] / sheet.unit[1], w };
    });
    const path = group.appendChild(document.createElementNS(NS, 'path'));
    path.setAttribute('class', 'ink-' + ink);
    if (filled) {
      const outline = points.map(p => `${n(p.x)} ${n(p.y)}`).join('L');
      path.setAttribute('d', `M${outline}z` + penPath([...points, points[0]]));
    } else {
      path.setAttribute('d', penPath(points));
    }
  }
}
```
